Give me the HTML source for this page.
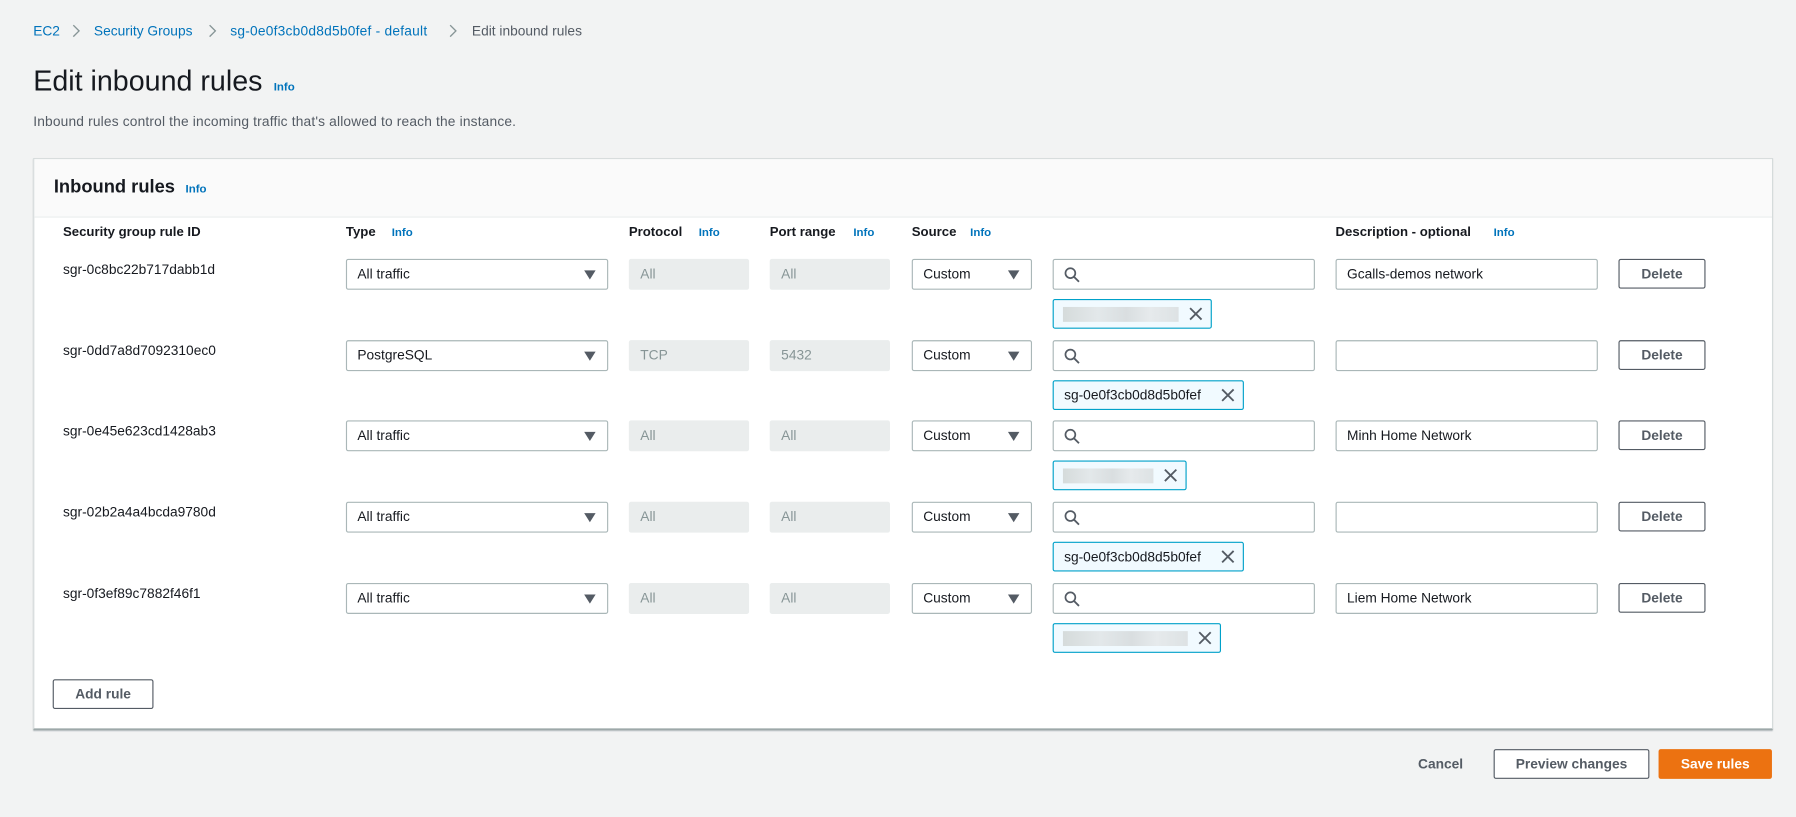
<!DOCTYPE html>
<html><head><meta charset="utf-8"><style>
html,body{margin:0;padding:0;background:#f2f3f3;width:1796px;height:817px;overflow:hidden}
#w{position:absolute;left:0;top:0;width:1568px;height:713px;transform:scale(1.14541);transform-origin:0 0;font-family:"Liberation Sans",sans-serif;color:#16191f}
.a{position:absolute;white-space:nowrap}
.bc{font-size:12px;top:20px}
.link{color:#0073bb}
.info{color:#0073bb;font-size:10px;font-weight:bold}
.panel{position:absolute;left:29px;top:138px;width:1517px;height:497px;background:#fff;border:1px solid #d5dbdb;border-bottom-color:#879596;box-shadow:0 1px 1px rgba(0,28,36,.3)}
.ph{position:absolute;left:0;top:0;right:0;height:50px;background:#fafafa;border-bottom:1px solid #eaeded}
.th{font-size:11.5px;font-weight:bold;top:197px}
.in{position:absolute;height:25px;border:1px solid #aab7b8;border-radius:2px;background:#fff;font-size:12px;line-height:25px;box-sizing:content-box}
.dis{background:#eaeded;border-color:#eaeded;color:#879596}
.tri{position:absolute;right:10px;top:9px;width:0;height:0;border-left:5px solid transparent;border-right:5px solid transparent;border-top:8px solid #545b64}
.btn{position:absolute;height:24px;border:1px solid #545b64;border-radius:2px;background:#fff;font-size:12px;font-weight:bold;color:#545b64;text-align:center;line-height:24px}
.tok{position:absolute;height:24px;border:1px solid #00a1c9;border-radius:2px;background:#f1faff;font-size:12px;line-height:24px}
.blur{position:absolute;left:8px;top:6px;height:13px;background:linear-gradient(90deg,#d5dbdb,#e3e8ea 30%,#d9dee0 55%,#e6eaec 75%,#dde2e4)}
.x{position:absolute;top:5px;width:14px;height:14px}
.chev{position:absolute;top:21px;width:8px;height:12px}
</style></head><body><div id="w">
<div class="a bc link" style="left:29px">EC2</div>
<svg class="chev" style="left:62px" viewBox="0 0 8 12"><path d="M2 1L7 6L2 11" fill="none" stroke="#879596" stroke-width="1.2"/></svg>
<div class="a bc link" style="left:82px">Security Groups</div>
<svg class="chev" style="left:181px" viewBox="0 0 8 12"><path d="M2 1L7 6L2 11" fill="none" stroke="#879596" stroke-width="1.2"/></svg>
<div class="a bc link" style="left:201px;letter-spacing:0.2px">sg-0e0f3cb0d8d5b0fef - default</div>
<svg class="chev" style="left:391px" viewBox="0 0 8 12"><path d="M2 1L7 6L2 11" fill="none" stroke="#879596" stroke-width="1.2"/></svg>
<div class="a bc" style="left:412px;color:#545b64">Edit inbound rules</div>
<div class="a" style="left:29px;top:57px;font-size:25px">Edit inbound rules</div>
<div class="a info" style="left:239px;top:71px">Info</div>
<div class="a" style="left:29px;top:99px;font-size:12px;color:#545b64;letter-spacing:0.15px">Inbound rules control the incoming traffic that's allowed to reach the instance.</div>
<div class="panel"><div class="ph"></div></div>
<div class="a" style="left:47px;top:155px;font-size:16px;font-weight:bold">Inbound rules</div>
<div class="a info" style="left:162px;top:160px">Info</div>
<div class="a th" style="left:55px">Security group rule ID</div>
<div class="a th" style="left:302px">Type</div><div class="a info" style="left:342px;top:198px">Info</div>
<div class="a th" style="left:549px">Protocol</div><div class="a info" style="left:610px;top:198px">Info</div>
<div class="a th" style="left:672px">Port range</div><div class="a info" style="left:745px;top:198px">Info</div>
<div class="a th" style="left:796px">Source</div><div class="a info" style="left:847px;top:198px">Info</div>
<div class="a th" style="left:1166px">Description - optional</div><div class="a info" style="left:1304px;top:198px">Info</div>
<div id="rows"></div>
<div class="btn" style="left:46px;top:593px;width:86px">Add rule</div>
<div class="a" style="left:1238px;top:660px;font-size:12px;font-weight:bold;color:#545b64">Cancel</div>
<div class="btn" style="left:1304px;top:654px;width:134px">Preview changes</div>
<div class="btn" style="left:1448px;top:654px;width:97px;background:#ec7211;border-color:#ec7211;color:#fff">Save rules</div>
</div>
<script>
var R=[["sgr-0c8bc22b717dabb1d","All traffic","All","All","Gcalls-demos network",139,""],
["sgr-0dd7a8d7092310ec0","PostgreSQL","TCP","5432","",167,"sg-0e0f3cb0d8d5b0fef"],
["sgr-0e45e623cd1428ab3","All traffic","All","All","Minh Home Network",117,""],
["sgr-02b2a4a4bcda9780d","All traffic","All","All","",167,"sg-0e0f3cb0d8d5b0fef"],
["sgr-0f3ef89c7882f46f1","All traffic","All","All","Liem Home Network",147,""]];
var h="",X='<svg class="x" style="right:6px" viewBox="0 0 14 14"><path d="M2 2L12 12M12 2L2 12" stroke="#545b64" stroke-width="1.6"/></svg>';
R.forEach(function(r,i){var y=226+i*70.7;
h+='<div class="a" style="left:55px;top:'+(y+2)+'px;font-size:12px">'+r[0]+'</div>';
h+='<div class="in" style="left:302px;top:'+y+'px;width:227px"><span style="padding-left:9px">'+r[1]+'</span><div class="tri"></div></div>';
h+='<div class="in dis" style="left:549px;top:'+y+'px;width:103px"><span style="padding-left:9px">'+r[2]+'</span></div>';
h+='<div class="in dis" style="left:672px;top:'+y+'px;width:103px"><span style="padding-left:9px">'+r[3]+'</span></div>';
h+='<div class="in" style="left:796px;top:'+y+'px;width:103px"><span style="padding-left:9px">Custom</span><div class="tri"></div></div>';
h+='<div class="in" style="left:919px;top:'+y+'px;width:227px"><svg style="position:absolute;left:9px;top:6px" width="14" height="14" viewBox="0 0 14 14"><circle cx="5.5" cy="5.5" r="4.3" fill="none" stroke="#545b64" stroke-width="1.5"/><path d="M8.7 8.7L13 13" stroke="#545b64" stroke-width="1.6"/></svg></div>';
h+='<div class="in" style="left:1166px;top:'+y+'px;width:227px"><span style="padding-left:9px">'+r[4]+'</span></div>';
h+='<div class="btn" style="left:1413px;top:'+y+'px;width:74px">Delete</div>';
var t=r[6]?'<span style="padding-left:9px">'+r[6]+'</span>':'<div class="blur" style="width:'+(r[5]-38)+'px"></div>';
h+='<div class="tok" style="left:919px;top:'+(y+35)+'px;width:'+(r[5]-2)+'px">'+t+X+'</div>';});
document.getElementById("rows").outerHTML=h;
</script>
</body></html>
